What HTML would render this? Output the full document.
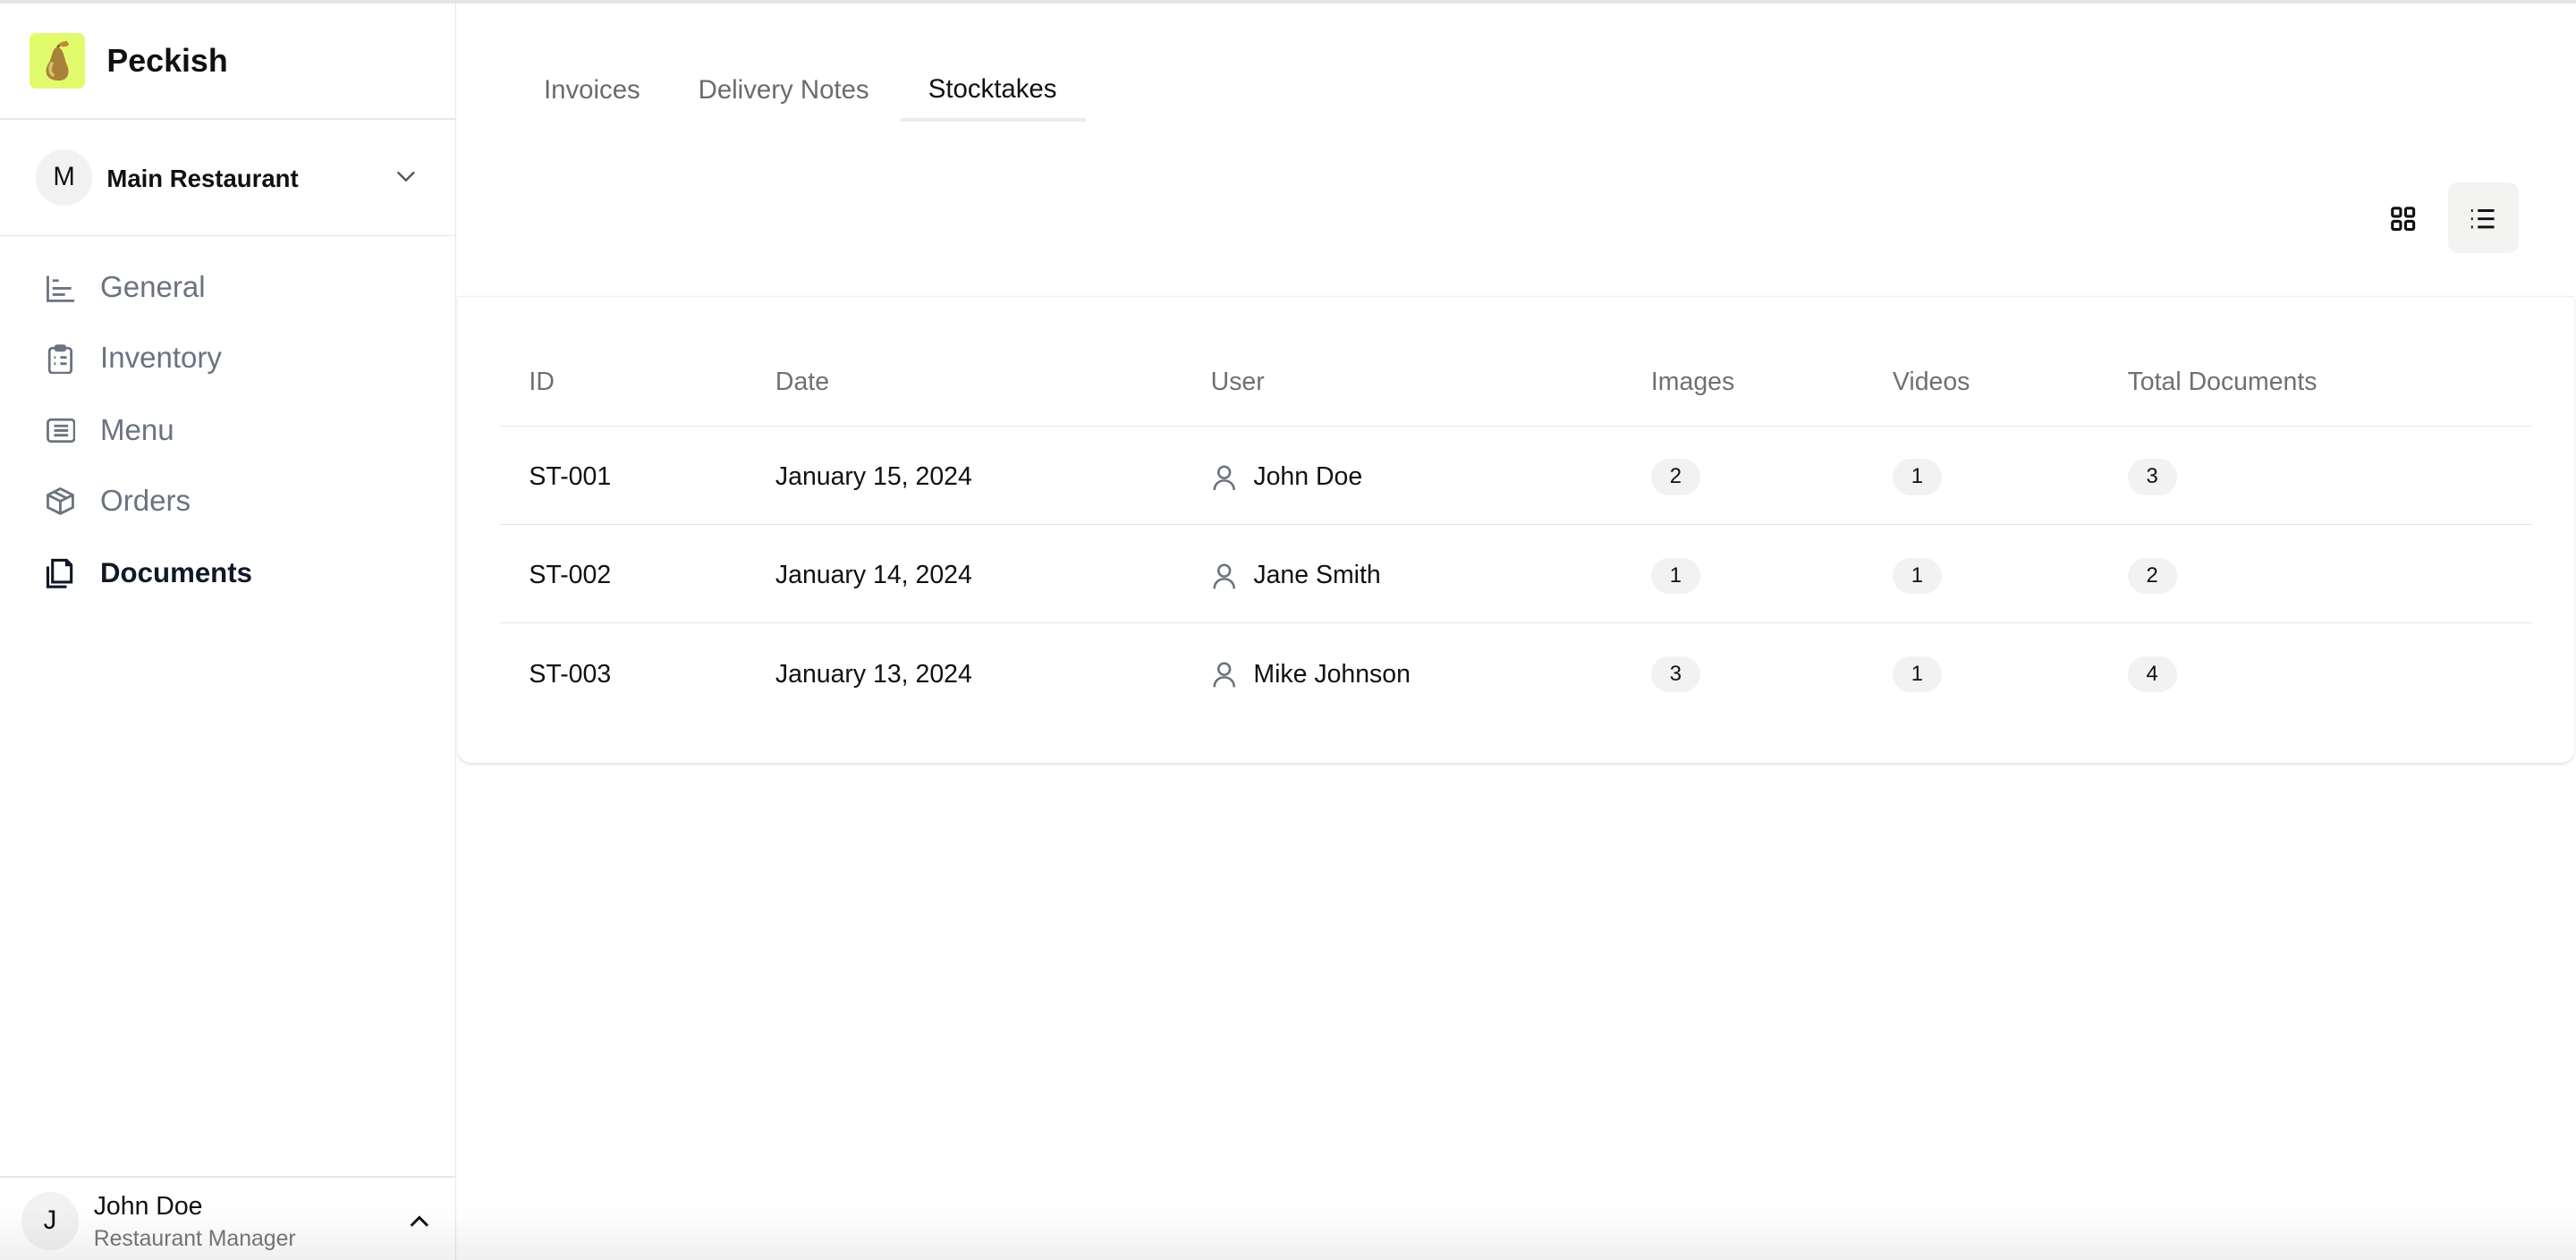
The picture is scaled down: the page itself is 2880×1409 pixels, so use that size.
<!DOCTYPE html>
<html><head><meta charset="utf-8"><style>
html,body{margin:0;padding:0;background:#fff;overflow:hidden}
#z{zoom:1.83673;width:1568px;height:767px;position:relative;font-family:"Liberation Sans",sans-serif;color:#111;overflow:hidden}
.a{position:absolute}
.side{left:0;top:0;width:277px;height:767px;border-right:1px solid #e5e7eb}
.hr{position:absolute;left:0;height:1px;background:#e5e7eb}
.nav{position:absolute;left:27px;display:flex;align-items:center;font-size:18px;color:#6b7280}
.nav svg{width:19px;height:19px;margin-right:15px}
.tab{position:absolute;top:45px;font-size:16px;color:#6b6b6b}
.row{position:absolute;left:305px;width:1236px;height:60px;border-top:1px solid #e5e5e5}
.c{position:absolute;top:1px;height:60px;display:flex;align-items:center;font-size:15.5px}
.b{display:inline-block;background:#f2f2f2;border-radius:11px;height:22px;min-width:30px;padding:0 2px;box-sizing:border-box;text-align:center;line-height:22px;font-size:13px}
.h{position:absolute;top:224px;font-size:15.5px;color:#736f6c}
</style></head><body><div id="z">
<div class="a" style="left:0;top:0;width:1568px;height:2px;background:#e6e6e6"></div>
<div class="a side"></div>
<div class="a" style="left:18px;top:20px;width:34px;height:34px;background:#e2fb6c;border-radius:4px"></div>
<svg class="a" style="left:24px;top:24px" width="22" height="28" viewBox="0 0 22 28"><path d="M11 5c-3 0-3 5-5 9-3 4-3 10 4 11 7 1 9-4 7-9-2-4-2-11-6-11z" fill="#a8823a"/><path d="M8 14c-2 3-2 7 1 8" stroke="#d8c070" stroke-width="2" fill="none"/><path d="M11 5c2-3 4-3 6-3" stroke="#8a5a1a" stroke-width="1.5" fill="none"/><ellipse cx="15" cy="3" rx="3" ry="1.5" fill="#c98a30"/></svg>
<div class="a" style="left:65px;top:26px;font-size:19.5px;font-weight:bold;color:#111">Peckish</div>
<div class="hr" style="top:72px;width:277px"></div>
<div class="a" style="left:22px;top:91px;width:34px;height:34px;border-radius:50%;background:#f2f2f2;text-align:center;line-height:34px;font-size:16px">M</div>
<div class="a" style="left:65px;top:100px;font-size:15px;font-weight:bold;color:#111">Main Restaurant</div>
<svg class="a" style="left:240px;top:102px" width="14" height="10" viewBox="0 0 14 10"><path d="M2 3l5 5 5-5" stroke="#555" stroke-width="1.3" fill="none"/></svg>
<div class="hr" style="top:143px;width:277px"></div>
<div class="nav" style="top:165px"><svg viewBox="0 0 20 20" fill="none" stroke="#6b7280" stroke-width="1.6"><path d="M2 2v16h17M5 5h4M5 10h12M5 14h8"/></svg>General</div>
<div class="nav" style="top:208px"><svg viewBox="0 0 20 20" fill="none" stroke="#6b7280" stroke-width="1.6"><rect x="3" y="3" width="14" height="16" rx="2"/><rect x="7" y="1.5" width="6" height="3" rx="1"/><path d="M6 9h1M10 9h4M6 13h1M10 13h4"/></svg>Inventory</div>
<div class="nav" style="top:252px"><svg viewBox="0 0 20 20" fill="none" stroke="#6b7280" stroke-width="1.6"><rect x="2" y="3" width="17" height="14" rx="2"/><path d="M6 7h9M6 10h9M6 13h9"/></svg>Menu</div>
<div class="nav" style="top:295px"><svg viewBox="0 0 20 20" fill="none" stroke="#6b7280" stroke-width="1.6"><path d="M10 2l8 4v8l-8 4-8-4V6z M2 6l8 4 8-4M10 10v8M6 4l8 4"/></svg>Orders</div>
<div class="nav" style="top:339px;color:#111827;font-weight:bold;font-size:17px"><svg viewBox="0 0 20 20" fill="none" stroke="#111827" stroke-width="1.8"><path d="M2 6v13h12"/><path d="M5 2h9l3 3v11H5z"/><path d="M14 2v3h3"/></svg>Documents</div>
<div class="hr" style="top:716px;width:277px"></div>
<div class="a" style="left:13px;top:726px;width:35px;height:35px;border-radius:50%;background:#f2f2f2;text-align:center;line-height:35px;font-size:16px">J</div>
<div class="a" style="left:57px;top:726px;font-size:15.5px;color:#111">John Doe</div>
<div class="a" style="left:57px;top:747px;font-size:13.5px;color:#777">Restaurant Manager</div>
<svg class="a" style="left:248px;top:738px" width="14" height="10" viewBox="0 0 14 10"><path d="M2 8l5-5 5 5" stroke="#111" stroke-width="1.6" fill="none"/></svg>
<div class="tab" style="left:331px;top:46px">Invoices</div>
<div class="tab" style="left:425px;top:46px">Delivery Notes</div>
<div class="tab" style="left:565px;color:#111">Stocktakes</div>
<div class="a" style="left:548px;top:72px;width:113px;height:2px;background:#ececec"></div>
<svg class="a" style="left:1455px;top:125px" width="16" height="16" viewBox="0 0 16 16" fill="none" stroke="#111" stroke-width="1.7"><rect x="1.5" y="1.5" width="5" height="5" rx="1"/><rect x="9.5" y="1.5" width="5" height="5" rx="1"/><rect x="1.5" y="9.5" width="5" height="5" rx="1"/><rect x="9.5" y="9.5" width="5" height="5" rx="1"/></svg>
<div class="a" style="left:1490px;top:111px;width:43px;height:43px;background:#f3f3f2;border-radius:6px"></div>
<svg class="a" style="left:1503px;top:125px" width="16" height="16" viewBox="0 0 16 16" stroke="#111" stroke-width="1.6"><path d="M5 3h10M5 8h10M5 13h10M1 3h1M1 8h1M1 13h1"/></svg>
<div class="a" style="left:279px;top:180px;width:1288px;height:284px;border-top:1px solid #f2f2f2;border-radius:0 0 8px 8px;box-shadow:0 1px 2px rgba(0,0,0,.12)"></div>
<div class="h" style="left:322px">ID</div><div class="h" style="left:472px">Date</div><div class="h" style="left:737px">User</div><div class="h" style="left:1005px">Images</div><div class="h" style="left:1152px">Videos</div><div class="h" style="left:1295px">Total Documents</div>
<div class="row" style="top:259px"><div class="c" style="left:17px">ST-001</div><div class="c" style="left:167px">January 15, 2024</div><div class="c" style="left:432px"><svg width="16" height="16" viewBox="0 0 16 16" fill="none" stroke="#6b7280" stroke-width="1.4" style="margin-right:10px"><circle cx="8" cy="5" r="3.5"/><path d="M2 16c0-4 3-6 6-6s6 2 6 6"/></svg>John Doe</div><div class="c" style="left:700px"><span class="b">2</span></div><div class="c" style="left:847px"><span class="b">1</span></div><div class="c" style="left:990px"><span class="b">3</span></div></div>
<div class="row" style="top:319px"><div class="c" style="left:17px">ST-002</div><div class="c" style="left:167px">January 14, 2024</div><div class="c" style="left:432px"><svg width="16" height="16" viewBox="0 0 16 16" fill="none" stroke="#6b7280" stroke-width="1.4" style="margin-right:10px"><circle cx="8" cy="5" r="3.5"/><path d="M2 16c0-4 3-6 6-6s6 2 6 6"/></svg>Jane Smith</div><div class="c" style="left:700px"><span class="b">1</span></div><div class="c" style="left:847px"><span class="b">1</span></div><div class="c" style="left:990px"><span class="b">2</span></div></div>
<div class="row" style="top:379px"><div class="c" style="left:17px">ST-003</div><div class="c" style="left:167px">January 13, 2024</div><div class="c" style="left:432px"><svg width="16" height="16" viewBox="0 0 16 16" fill="none" stroke="#6b7280" stroke-width="1.4" style="margin-right:10px"><circle cx="8" cy="5" r="3.5"/><path d="M2 16c0-4 3-6 6-6s6 2 6 6"/></svg>Mike Johnson</div><div class="c" style="left:700px"><span class="b">3</span></div><div class="c" style="left:847px"><span class="b">1</span></div><div class="c" style="left:990px"><span class="b">4</span></div></div>
<div class="a" style="left:0;top:735px;width:1568px;height:32px;background:linear-gradient(rgba(0,0,0,0),rgba(0,0,0,.06));pointer-events:none"></div>
</div></body></html>
